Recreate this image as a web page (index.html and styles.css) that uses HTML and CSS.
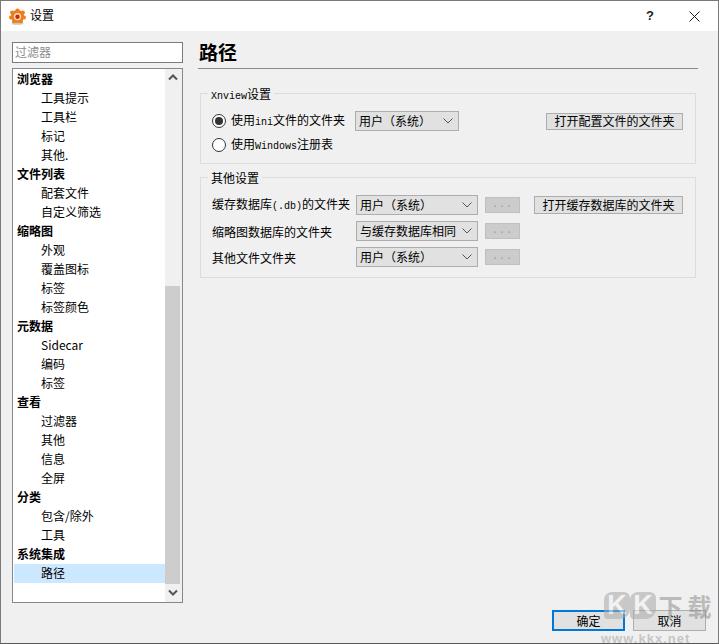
FILE: index.html
```html
<!DOCTYPE html>
<html lang="zh-CN">
<head>
<meta charset="utf-8">
<title>设置</title>
<link rel="stylesheet" href="styles.css">
</head>
<body>
<div class="window">
  <header class="titlebar">
    <svg class="logo" width="17" height="17" viewBox="0 0 17 17">
      <g fill="#ef7d1a">
        <circle cx="8.5" cy="2.6" r="2.1"/><circle cx="3.2" cy="4.6" r="2.1"/><circle cx="13.8" cy="4.6" r="2.1"/>
        <circle cx="2" cy="9.4" r="2"/><circle cx="15" cy="9.4" r="2"/><circle cx="5" cy="13.8" r="2"/><circle cx="12" cy="13.8" r="2"/>
        <circle cx="8.5" cy="8.5" r="6.6"/>
      </g>
      <circle cx="8.5" cy="8.7" r="3.600" fill="#fbe3c4"/>
      <circle cx="8.5" cy="8.7" r="2.200" fill="#c8260f"/>
      <ellipse cx="8.5" cy="15.8" rx="6" ry="1" fill="#c9c3bb"/>
    </svg>
    <span class="title">设置</span>
    <span class="help">?</span>
    <svg class="close" width="11" height="11" viewBox="0 0 11 11"><path d="M.5.5l10 10M10.500.5l-10 10" stroke="#1a1a1a" fill="none"/></svg>
  </header>
  <div class="content">
    <aside class="sidebar">
      <div class="filter">过滤器</div>
      <div class="listbox">
        <ul class="tree">
          <li class="cat">浏览器</li>
          <li class="sub">工具提示</li>
          <li class="sub">工具栏</li>
          <li class="sub">标记</li>
          <li class="sub">其他.</li>
          <li class="cat">文件列表</li>
          <li class="sub">配套文件</li>
          <li class="sub">自定义筛选</li>
          <li class="cat">缩略图</li>
          <li class="sub">外观</li>
          <li class="sub">覆盖图标</li>
          <li class="sub">标签</li>
          <li class="sub">标签颜色</li>
          <li class="cat">元数据</li>
          <li class="sub">Sidecar</li>
          <li class="sub">编码</li>
          <li class="sub">标签</li>
          <li class="cat">查看</li>
          <li class="sub">过滤器</li>
          <li class="sub">其他</li>
          <li class="sub">信息</li>
          <li class="sub">全屏</li>
          <li class="cat">分类</li>
          <li class="sub">包含/除外</li>
          <li class="sub">工具</li>
          <li class="cat">系统集成</li>
          <li class="sub selected">路径</li>
        </ul>
        <div class="scrollbar">
          <svg class="arrow" width="17" height="18" viewBox="0 0 17 18"><path d="M4 10.500l4-4 4 4" fill="none" stroke="#555" stroke-width="2"/></svg>
          <div class="track"><div class="thumb"></div></div>
          <svg class="arrow" width="17" height="18" viewBox="0 0 17 18"><path d="M4 6.500l4 4 4-4" fill="none" stroke="#555" stroke-width="2"/></svg>
        </div>
      </div>
    </aside>
    <main class="panel">
      <h1 class="heading">路径</h1>
      <section class="group group-a">
        <div class="legend"><span class="mono">Xnview</span>设置</div>
        <div class="row row-first">
          <span class="radio checked"></span>
          <span class="radio-label label-ini">使用<span class="mono">ini</span>文件的文件夹</span>
          <div class="combo combo-short"><span>用户（系统）</span><svg class="chev" width="10" height="6" viewBox="0 0 10 6"><path d="M.5.500l4.500 4.500 4.500-4.500" fill="none" stroke="#555"/></svg></div>
          <button class="btn btn-config">打开配置文件的文件夹</button>
        </div>
        <div class="row row-second">
          <span class="radio"></span>
          <span class="radio-label">使用<span class="mono">Windows</span>注册表</span>
        </div>
      </section>
      <section class="group group-b">
        <div class="legend">其他设置</div>
        <div class="row path-row">
          <span class="path-label">缓存数据库<span class="mono">(.db)</span>的文件夹</span>
          <div class="combo combo-long"><span>用户（系统）</span><svg class="chev" width="10" height="6" viewBox="0 0 10 6"><path d="M.5.500l4.500 4.500 4.500-4.500" fill="none" stroke="#555"/></svg></div>
          <button class="btn-dots">...</button>
          <button class="btn btn-cache">打开缓存数据库的文件夹</button>
        </div>
        <div class="row path-row">
          <span class="path-label">缩略图数据库的文件夹</span>
          <div class="combo combo-long"><span>与缓存数据库相同</span><svg class="chev" width="10" height="6" viewBox="0 0 10 6"><path d="M.5.500l4.500 4.500 4.500-4.500" fill="none" stroke="#555"/></svg></div>
          <button class="btn-dots">...</button>
        </div>
        <div class="row path-row">
          <span class="path-label">其他文件文件夹</span>
          <div class="combo combo-long"><span>用户（系统）</span><svg class="chev" width="10" height="6" viewBox="0 0 10 6"><path d="M.5.500l4.500 4.500 4.500-4.500" fill="none" stroke="#555"/></svg></div>
          <button class="btn-dots">...</button>
        </div>
      </section>
    </main>
  </div>
  <footer class="footer">
    <button class="dlg dlg-ok">确定</button>
    <button class="dlg">取消</button>
  </footer>
  <div class="watermark">
    <div class="wm-big"><span class="wm-k">K</span><span class="wm-k">K</span><span class="wm-cn">下</span><span class="wm-cn">载</span></div>
    <div class="wm-url">www.kkx.net</div>
  </div>
</div>
</body>
</html>
```
FILE: styles.css
```css
* { box-sizing: border-box; }
html, body { margin: 0; padding: 0; }
body {
  width: 719px;
  height: 644px;
  overflow: hidden;
  font: 12px/16px "Noto Sans CJK SC", "Liberation Sans", sans-serif;
  color: #000;
  background: #f0f0f0;
}
.mono { font-family: "Liberation Mono", monospace; font-size: 10px; }
.window {
  position: relative;
  width: 719px;
  height: 644px;
  display: flex;
  flex-direction: column;
  border: 1px solid #7a7a7a;
  border-bottom-color: #5a5a5a;
  background: #f0f0f0;
}
.titlebar {
  flex: none;
  height: 30px;
  background: #fff;
  display: flex;
  align-items: center;
  padding-left: 8px;
}
.logo { margin-right: 4px; }
.title { flex: 1; font-size: 12px; padding-bottom: 2px; }
.help { width: 14px; font: 700 13px/16px "Liberation Sans", sans-serif; color: #222; margin-right: 29px; }
.close { margin-right: 18px; }
.content { flex: 1; display: flex; min-height: 0; }
.sidebar { width: 197px; flex: none; padding: 11px 0 0 11px; }
.filter {
  width: 171px;
  height: 21px;
  border: 1px solid #7a7a7a;
  background: #fff;
  color: #8c8c8c;
  padding-left: 2px;
  line-height: 18px;
}
.listbox {
  margin-top: 5px;
  width: 171px;
  height: 535px;
  border: 1px solid #828790;
  background: #fff;
  display: flex;
}
.tree { flex: 1; margin: 0; padding: 1px 0 0 1px; list-style: none; min-width: 0; }
.tree li { height: 19px; line-height: 18px; white-space: nowrap; }
.cat { padding-left: 3px; font-weight: 700; }
.sub { padding-left: 27px; }
.selected { background: #cce8ff; }
.scrollbar {
  flex: none;
  width: 17px;
  background: #f0f0f0;
  display: flex;
  flex-direction: column;
}
.arrow { flex: none; display: block; }
.track { flex: 1; display: flex; flex-direction: column; justify-content: flex-end; }
.thumb { height: 298px; width: 15px; background: #cdcdcd; }
.panel { flex: 1; padding: 10px 20px 0 0; min-width: 0; }
.heading {
  margin: 0 0 24px;
  height: 28px;
  font-size: 19px;
  line-height: 21px;
  font-weight: 700;
  padding-left: 1px;
  border-bottom: 1px solid #8a8a8a;
}
.group {
  position: relative;
  margin-left: 2px;
  width: 496px;
  border: 1px solid #dcdcdc;
}
.group-a { height: 71px; margin-bottom: 13px; padding: 17px 11px 0; }
.group-b { height: 101px; padding: 17px 11px 0; }
.legend {
  position: absolute;
  top: -8px;
  left: 7px;
  padding: 0 3px;
  background: #f0f0f0;
}
.row { display: flex; align-items: center; }
.row-first { height: 20px; }
.row-second { height: 20px; margin-top: 4px; }
.radio {
  width: 14px;
  height: 14px;
  border: 1px solid #333;
  border-radius: 50%;
  background: #fff;
  flex: none;
  display: flex;
  align-items: center;
  justify-content: center;
}
.radio.checked::after { content: ""; width: 8px; height: 8px; border-radius: 50%; background: #333; }
.radio-label { margin-left: 5px; padding-top: 1px; }
.label-ini { width: 124px; }
.combo {
  height: 20px;
  background: #e1e1e1;
  border: 1px solid #adadad;
  display: flex;
  align-items: center;
  justify-content: space-between;
  padding: 0 5px 0 3px;
  flex: none;
}
.combo-short { width: 104px; }
.combo-long { width: 122px; }
.btn {
  height: 17px;
  background: #e1e1e1;
  border: 1px solid #adadad;
  padding: 0;
  font: inherit;
  line-height: 14px;
  color: #000;
}
.btn-config { width: 137px; margin-left: 87px; }
.btn-cache { width: 149px; height: 18px; margin-left: 14px; }
.path-row { height: 20px; margin-bottom: 6px; }
.path-label { width: 144px; flex: none; padding-top: 1px; }
.btn-dots {
  width: 35px;
  height: 16px;
  margin-left: 7px;
  padding: 0;
  background: #cccccc;
  border: 1px solid #bfbfbf;
  color: #9a9a9a;
  font: 10px/12px "Liberation Mono", monospace;
  letter-spacing: 1px;
}
.footer {
  flex: none;
  height: 42px;
  display: flex;
  justify-content: flex-end;
  gap: 8px;
  padding: 9px 12px 0 0;
}
.dlg {
  width: 73px;
  height: 21px;
  background: #e1e1e1;
  border: 1px solid #adadad;
  padding: 0;
  font: inherit;
  color: #000;
}
.dlg-ok { border: 2px solid #0078d7; }
.watermark {
  position: absolute;
  left: 596px;
  top: 591px;
  width: 120px;
  pointer-events: none;
}
.wm-big {
  display: flex;
  height: 41px;
  padding-left: 7px;
  opacity: .55;
}
.wm-k {
  width: 26px;
  height: 27px;
  background: #a9a9a9;
  border-radius: 8px 6px 10px 4px;
  color: #f4f4f4;
  font: 700 27px/27px "Liberation Sans", sans-serif;
  text-align: center;
}
.wm-cn {
  width: 29px;
  height: 27px;
  color: #8f8f8f;
  font: 700 24px/27px "Noto Sans CJK SC", sans-serif;
  text-align: center;
}
.wm-url {
  padding-left: 4px;
  color: #c6c6c6;
  font: 700 13px/11px "Liberation Sans", sans-serif;
  letter-spacing: 1px;
}
```
